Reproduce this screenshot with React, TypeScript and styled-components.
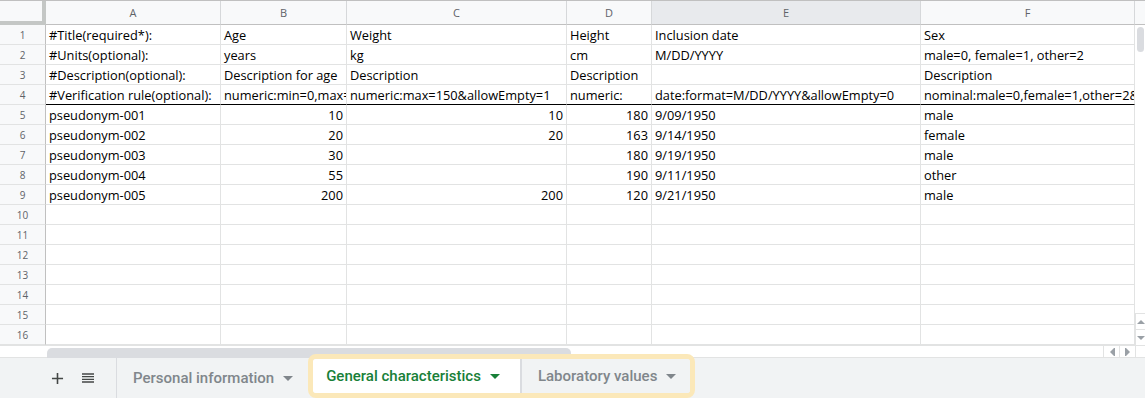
import React from "react";
import styled, { createGlobalStyle } from "styled-components";

const GlobalStyle = createGlobalStyle`
  html, body {
    margin: 0;
    padding: 0;
    background: #ffffff;
  }
  * {
    box-sizing: border-box;
  }
`;

const COLS = [
  { label: "A", width: 175 },
  { label: "B", width: 126 },
  { label: "C", width: 220 },
  { label: "D", width: 85 },
  { label: "E", width: 269, selected: true },
  { label: "F", width: 214 },
];

type CellValue = string | number | null;

const ROWS: CellValue[][] = [
  ["#Title(required*):", "Age", "Weight", "Height", "Inclusion date", "Sex"],
  ["#Units(optional):", "years", "kg", "cm", "M/DD/YYYY", "male=0, female=1, other=2"],
  ["#Description(optional):", "Description for age", "Description", "Description", null, "Description"],
  [
    "#Verification rule(optional):",
    "numeric:min=0,max=150&allowEmpty=0",
    "numeric:max=150&allowEmpty=1",
    "numeric:",
    "date:format=M/DD/YYYY&allowEmpty=0",
    "nominal:male=0,female=1,other=2&allowEmpty=0",
  ],
  ["pseudonym-001", 10, 10, 180, "9/09/1950", "male"],
  ["pseudonym-002", 20, 20, 163, "9/14/1950", "female"],
  ["pseudonym-003", 30, null, 180, "9/19/1950", "male"],
  ["pseudonym-004", 55, null, 190, "9/11/1950", "other"],
  ["pseudonym-005", 200, 200, 120, "9/21/1950", "male"],
];

const TOTAL_ROWS = 16;

function Caret({ color }: { color: string }) {
  return (
    <svg width="10" height="5" viewBox="0 0 10 5">
      <path d="M0 0h10L5 5z" fill={color} />
    </svg>
  );
}

export default function App() {
  const rows = Array.from({ length: TOTAL_ROWS }, (_, i) => ROWS[i] || []);

  return (
    <Sheet>
      <GlobalStyle />
      <Body>
        <Grid>
          <HeaderRow>
            <Corner />
            {COLS.map((c) => (
              <ColHeader key={c.label} $w={c.width} $selected={c.selected}>
                {c.label}
              </ColHeader>
            ))}
          </HeaderRow>
          {rows.map((row, i) => (
            <Row key={i}>
              <RowNumber>{i + 1}</RowNumber>
              {COLS.map((c, j) => {
                const v = row[j];
                return (
                  <Cell
                    key={c.label}
                    $w={c.width}
                    $num={typeof v === "number"}
                    $frozen={i === 3}
                  >
                    {v ?? ""}
                  </Cell>
                );
              })}
            </Row>
          ))}
        </Grid>
        <VScroll>
          <VScrollHead />
          <VTrack>
            <VThumb />
          </VTrack>
          <ScrollButton>
            <svg width="8" height="4" viewBox="0 0 8 4">
              <path d="M0 4h8L4 0z" fill="#9aa0a6" />
            </svg>
          </ScrollButton>
          <ScrollButton>
            <svg width="8" height="4" viewBox="0 0 8 4">
              <path d="M0 0h8L4 4z" fill="#9aa0a6" />
            </svg>
          </ScrollButton>
        </VScroll>
      </Body>
      <HScroll>
        <HTrack>
          <HThumb />
        </HTrack>
        <HButton>
          <svg width="6" height="8" viewBox="0 0 6 8">
            <path d="M5 0h1v8H5zM5 0v8L1 4z" fill="#9aa0a6" />
          </svg>
        </HButton>
        <HButton>
          <svg width="6" height="8" viewBox="0 0 6 8">
            <path d="M0 0h1v8H0zM1 0v8l4-4z" fill="#9aa0a6" />
          </svg>
        </HButton>
        <HCorner />
      </HScroll>
      <TabBar>
        <TabTools>
          <ToolIcon>
            <svg width="19" height="19" viewBox="0 0 24 24">
              <path d="M19 13h-6v6h-2v-6H5v-2h6V5h2v6h6v2z" fill="#444746" />
            </svg>
          </ToolIcon>
          <ToolIcon>
            <svg width="16" height="16" viewBox="0 0 24 24">
              <path
                d="M3 15h18v-2H3v2zm0 4h18v-2H3v2zm0-8h18V9H3v2zm0-6v2h18V5H3z"
                fill="#444746"
              />
            </svg>
          </ToolIcon>
        </TabTools>
        <Tab $pl={16} $pr={15}>
          <TabLabel>Personal information</TabLabel>
          <Caret color="#80868b" />
        </Tab>
        <Highlight>
          <Tab $active $pl={13} $pr={20}>
            <TabLabel $active>General characteristics</TabLabel>
            <Caret color="#188038" />
          </Tab>
          <TabDivider />
          <Tab $pl={16} $pr={14}>
            <TabLabel>Laboratory values</TabLabel>
            <Caret color="#80868b" />
          </Tab>
        </Highlight>
      </TabBar>
    </Sheet>
  );
}

const Sheet = styled.div`
  width: 1145px;
  height: 398px;
  display: flex;
  flex-direction: column;
  overflow: hidden;
  background: #ffffff;
`;

const Body = styled.div`
  display: flex;
  height: 345px;
`;

const Grid = styled.div`
  width: 1135px;
  display: flex;
  flex-direction: column;
`;

const HeaderRow = styled.div`
  display: flex;
  height: 25px;
  border-top: 1px solid #c0c0c0;
`;

const Corner = styled.div`
  width: 46px;
  height: 24px;
  background: #f8f9fa;
  border-right: 4px solid #c4c7c5;
  border-bottom: 4px solid #c4c7c5;
`;

const ColHeader = styled.div<{ $w: number; $selected?: boolean }>`
  width: ${(p) => p.$w}px;
  height: 24px;
  display: flex;
  align-items: center;
  justify-content: center;
  background: ${(p) => (p.$selected ? "#e8eaed" : "#f8f9fa")};
  border-right: 1px solid #d6d8da;
  border-bottom: 1px solid #c0c0c0;
  font-family: "Open Sans", "Liberation Sans", Arial, sans-serif;
  font-size: 11px;
  color: #5f6368;
`;

const Row = styled.div`
  display: flex;
  height: 20px;
`;

const RowNumber = styled.div`
  width: 46px;
  height: 20px;
  display: flex;
  align-items: center;
  justify-content: center;
  background: #f8f9fa;
  border-right: 1px solid #c0c0c0;
  border-bottom: 1px solid #e2e3e3;
  font-family: "Open Sans", "Liberation Sans", Arial, sans-serif;
  font-size: 10px;
  color: #5f6368;
`;

const Cell = styled.div<{ $w: number; $num: boolean; $frozen: boolean }>`
  width: ${(p) => p.$w}px;
  height: 20px;
  padding: 1px 3px 0;
  border-right: 1px solid #e2e3e3;
  border-bottom: ${(p) => (p.$frozen ? "1px solid #000000" : "1px solid #e2e3e3")};
  font-family: "Open Sans", "Liberation Sans", Arial, sans-serif;
  font-size: 12.8px;
  line-height: 18px;
  color: #000000;
  text-align: ${(p) => (p.$num ? "right" : "left")};
  white-space: nowrap;
  overflow: hidden;
`;

const VScroll = styled.div`
  width: 10px;
  display: flex;
  flex-direction: column;
  background: #ffffff;
`;

const VScrollHead = styled.div`
  height: 25px;
  background: #f8f9fa;
  border-top: 1px solid #c0c0c0;
  border-bottom: 1px solid #c0c0c0;
`;

const VTrack = styled.div`
  flex: 1;
  padding: 2px 1px 0 2px;
`;

const VThumb = styled.div`
  height: 25px;
  border-radius: 4px;
  background: #dadce0;
`;

const ScrollButton = styled.div`
  height: 16px;
  display: flex;
  align-items: center;
  justify-content: center;
  border-top: 1px solid #e2e3e3;
  border-left: 1px solid #e2e3e3;
`;

const HScroll = styled.div`
  display: flex;
  height: 13px;
  border-top: 1px solid #e2e3e3;
  border-bottom: 1px solid #e2e3e3;
`;

const HTrack = styled.div`
  width: 1103px;
  padding: 2px 0 0 47px;
`;

const HThumb = styled.div`
  width: 524px;
  height: 10px;
  border-radius: 5px 5px 0 0;
  background: #dadce0;
`;

const HButton = styled.div`
  width: 16px;
  display: flex;
  align-items: center;
  justify-content: center;
  border-left: 1px solid #e2e3e3;
`;

const HCorner = styled.div`
  flex: 1;
  border-left: 1px solid #e2e3e3;
`;

const TabBar = styled.div`
  flex: 1;
  display: flex;
  align-items: stretch;
  background: #f1f3f4;
  font-family: Roboto, "Liberation Sans", Arial, sans-serif;
`;

const TabTools = styled.div`
  width: 117px;
  display: flex;
  align-items: center;
  padding-left: 46px;
  gap: 9px;
  border-right: 1px solid #dadce0;
`;

const ToolIcon = styled.div`
  width: 22px;
  height: 22px;
  display: flex;
  align-items: center;
  justify-content: center;
`;

const Tab = styled.div<{ $active?: boolean; $pl: number; $pr: number }>`
  display: flex;
  align-items: center;
  gap: 9px;
  padding: 0 ${(p) => p.$pr}px 0 ${(p) => p.$pl}px;
  background: ${(p) => (p.$active ? "#ffffff" : "#f1f3f4")};
`;

const TabLabel = styled.span<{ $active?: boolean }>`
  font-size: 15px;
  font-weight: 500;
  color: ${(p) => (p.$active ? "#188038" : "#80868b")};
  white-space: nowrap;
`;

const Highlight = styled.div`
  display: flex;
  margin-top: -4px;
  border: 5px solid #fbe8b9;
  border-radius: 8px;
  overflow: hidden;
`;

const TabDivider = styled.div`
  width: 2px;
  background: #dadce0;
`;
